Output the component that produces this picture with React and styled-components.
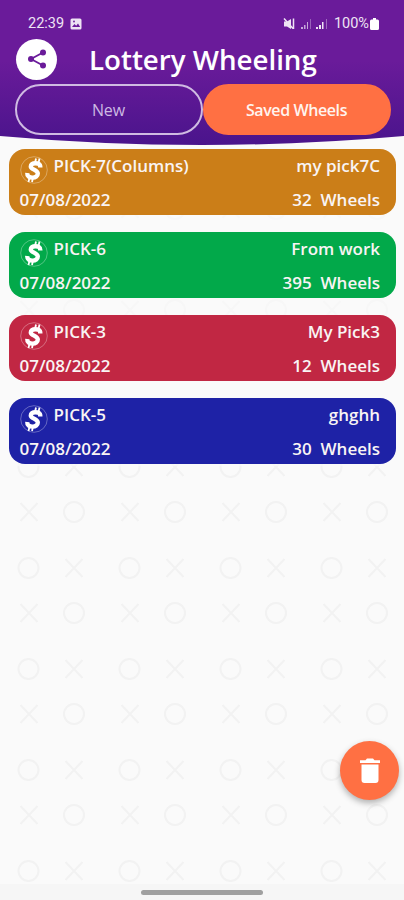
import React from "react";
import styled, { createGlobalStyle } from "styled-components";

const GlobalStyle = createGlobalStyle`
  * { box-sizing: border-box; }
  body { margin: 0; background: #fafafa; font-family: "Open Sans", "Noto Sans", sans-serif; }
`;

const Screen = styled.div`
  position: relative;
  display: flex;
  flex-direction: column;
  width: 404px;
  height: 900px;
  overflow: hidden;
  background: #fafafa;
`;

const Backdrop = styled.svg`
  position: absolute;
  inset: 0;
  width: 404px;
  height: 884px;
`;

const Header = styled.header`
  position: relative;
  flex: none;
  height: 149px;
`;

const HeaderShape = styled.svg`
  position: absolute;
  top: 0;
  left: 0;
`;

const StatusBar = styled.div`
  position: relative;
  display: flex;
  align-items: center;
  height: 38px;
  padding: 9px 25px 0 28px;
  color: #eee3f4;
  font-family: Roboto, sans-serif;
  font-size: 14.5px;
  line-height: 16px;
`;

const Clock = styled.span`
  width: 42px;
`;

const StatusRight = styled.div`
  display: flex;
  align-items: center;
  gap: 1px;
  margin-left: auto;
`;

const TitleRow = styled.div`
  position: relative;
  display: flex;
  align-items: center;
  height: 42px;
  padding-left: 16px;
`;

const ShareButton = styled.button`
  display: flex;
  align-items: center;
  justify-content: center;
  width: 41px;
  height: 41px;
  padding: 0;
  border: 0;
  border-radius: 50%;
  background: #fff;
`;

const Title = styled.h1`
  margin: 0 0 0 32px;
  color: #fff;
  font-size: 27.7px;
  font-weight: 600;
  line-height: 40px;
  white-space: nowrap;
`;

const Tabs = styled.div`
  position: relative;
  display: flex;
  margin-top: 4px;
  padding-left: 14.5px;
`;

const Tab = styled.button`
  width: 188px;
  height: 51px;
  padding: 0;
  border: 2px solid ${({ $active }) => ($active ? "#ff7043" : "#cfbbe2")};
  border-radius: 26px;
  background: ${({ $active }) => ($active ? "#ff7043" : "transparent")};
  color: ${({ $active }) => ($active ? "#fff4ef" : "#cdb9e3")};
  font-family: inherit;
  font-size: 16px;
  font-weight: ${({ $active }) => ($active ? 600 : 500)};
  letter-spacing: ${({ $active }) => ($active ? "-0.4px" : "-0.1px")};
`;

const List = styled.main`
  position: relative;
  display: flex;
  flex-direction: column;
  gap: 16.8px;
  padding: 0.4px 8px 0 9px;
`;

const Card = styled.article`
  display: flex;
  flex-direction: column;
  height: 66px;
  padding: 0 16px 0 10.5px;
  border-radius: 16px;
  background: ${({ $color }) => $color};
  color: #f9f4f4;
  font-size: 17px;
  font-weight: 600;
`;

const CardRow = styled.div`
  display: flex;
  align-items: flex-start;
  justify-content: space-between;
  height: 34px;
  line-height: 33px;
  white-space: pre;
`;

const Name = styled.div`
  display: flex;
  gap: 6px;
`;

const CoinIcon = styled.svg`
  flex: none;
  margin-top: 7px;
`;

const DeleteButton = styled.button`
  position: absolute;
  right: 5px;
  bottom: 100px;
  display: flex;
  align-items: center;
  justify-content: center;
  width: 59px;
  height: 59px;
  padding: 0;
  border: 0;
  border-radius: 50%;
  background: #ff7043;
  box-shadow: 0 3px 6px rgba(0, 0, 0, 0.3);
`;

const NavBar = styled.footer`
  position: relative;
  display: flex;
  justify-content: center;
  height: 16px;
  margin-top: auto;
  padding-top: 6px;
  background: #f6f6f6;
`;

const NavHandle = styled.div`
  width: 122px;
  height: 5px;
  border-radius: 3px;
  background: #a0a0a0;
`;

const wheels = [
  { type: "PICK-7(Columns)", name: "my pick7C", date: "07/08/2022", count: 32, color: "#cb7e18" },
  { type: "PICK-6", name: "From work", date: "07/08/2022", count: 395, color: "#02a94a" },
  { type: "PICK-3", name: "My Pick3", date: "07/08/2022", count: 12, color: "#c12743" },
  { type: "PICK-5", name: "ghghh", date: "07/08/2022", count: 30, color: "#1e22a6" },
];

const Coin = () => (
  <CoinIcon width="28" height="28" viewBox="0 0 28 28">
    <circle cx="14" cy="14" r="13.3" fill="none" stroke="#fff" strokeWidth="0.8" opacity="0.4" />
    <path d="M16 2.5 15 7M19.5 2.5 18.500 7M9.500 21.500 8.500 26M13 21.500 12 26" stroke="#fff" strokeWidth="1.8" />
    <path d="M20.300 11.500C20.500 7.800 17.500 7.200 15.500 7.200 12.500 7.200 10.800 8.600 10.800 10.400 10.800 13.600 17.800 13.800 17.800 17.600 17.800 20 15.600 21.600 12.600 21.600 9.300 21.600 7 20.200 7.300 17" fill="none" stroke="#fff" strokeWidth="4.4" />
  </CoinIcon>
);

const App = () => (
  <>
    <GlobalStyle />
    <Screen>
      <Backdrop>
        <defs>
          <pattern id="noughts" x="0" y="38" width="101" height="101" patternUnits="userSpaceOnUse">
            <g fill="none" stroke="#f2f2f2" strokeWidth="2">
              <circle cx="28.5" cy="25" r="10" />
              <path d="m65.5 16 17 18m0-18-17 18M20.500 61l17 18m0-18-17 18" />
              <circle cx="74" cy="70" r="10" />
            </g>
          </pattern>
        </defs>
        <rect width="404" height="884" fill="url(#noughts)" />
        <rect y="136" width="404" height="330" fill="#fafafa" opacity="0.6" />
      </Backdrop>
      <Header>
        <HeaderShape width="404" height="149">
          <defs>
            <linearGradient id="violet" x1="0" y1="0" x2="0" y2="1">
              <stop offset="0.42" stopColor="#6a1b9a" />
              <stop offset="1" stopColor="#4a148c" />
            </linearGradient>
          </defs>
          <path d="M0 0H404V136Q202 154 0 136Z" fill="url(#violet)" />
        </HeaderShape>
        <StatusBar>
          <Clock>22:39</Clock>
          <svg width="12" height="12" viewBox="0 0 12 12">
            <rect x="0.5" y="0.5" width="11" height="11" rx="1.5" fill="#eee3f4" />
            <path d="m2 9 2.5-3 1.7 1.8L8 5.5 10.2 9Z" fill="#6a1b9a" />
            <circle cx="4" cy="3.5" r="0.9" fill="#6a1b9a" />
          </svg>
          <StatusRight>
            <svg width="50" height="14" viewBox="0 0 50 14" fill="#eee3f4">
              <path d="M1 4.5h3L8 2v10L4 9.5H1Z" />
              <path d="m1 1.5 9 10M10.500 1.5V12" fill="none" stroke="#eee3f4" strokeWidth="1.5" />
              <g opacity="0.7">
                <path d="M18 10h2v2h-2zM21 8h1.5v4H21zM24 5h1v7h-1z" />
                <path d="M27 2h1v10h-1z" opacity="0.5" />
              </g>
              <path d="M33 10h2v2h-2zM36 8h2v4h-2zM39 5h1.5v7H39z" />
              <path d="M43 2h1v10h-1z" opacity="0.4" />
            </svg>
            100%
            <svg width="9" height="12" viewBox="0 0 9 12" fill="#fff">
              <path d="M3 0h3v1.5h1.5Q9 1.5 9 3v7.5Q9 12 7.5 12h-6Q0 12 0 10.5V3Q0 1.5 1.5 1.5H3Z" />
            </svg>
          </StatusRight>
        </StatusBar>
        <TitleRow>
          <ShareButton aria-label="Share">
            <svg width="20" height="20" viewBox="0 0 20 20" fill="#6a1b9a">
              <path d="M16 3.5 4 10l12 6.5" fill="none" stroke="#6a1b9a" strokeWidth="1.8" />
              <circle cx="16" cy="3.5" r="3" />
              <circle cx="4" cy="10" r="3" />
              <circle cx="16" cy="16.5" r="3" />
            </svg>
          </ShareButton>
          <Title>Lottery Wheeling</Title>
        </TitleRow>
        <Tabs>
          <Tab>New</Tab>
          <Tab $active>Saved Wheels</Tab>
        </Tabs>
      </Header>
      <List>
        {wheels.map((wheel) => (
          <Card key={wheel.type} $color={wheel.color}>
            <CardRow>
              <Name>
                <Coin />
                {wheel.type}
              </Name>
              <span>{wheel.name}</span>
            </CardRow>
            <CardRow>
              <span>{wheel.date}</span>
              <span>{wheel.count}{"  Wheels"}</span>
            </CardRow>
          </Card>
        ))}
      </List>
      <DeleteButton aria-label="Delete">
        <svg width="20" height="25" viewBox="0 0 20 25" fill="#fff">
          <path d="M0 2.2h5.5L7 .5h6l1.5 1.7H20V5H0zM1.500 6.5h17V22q0 3-3 3h-11q-3 0-3-3z" />
        </svg>
      </DeleteButton>
      <NavBar>
        <NavHandle />
      </NavBar>
    </Screen>
  </>
);

export default App;
